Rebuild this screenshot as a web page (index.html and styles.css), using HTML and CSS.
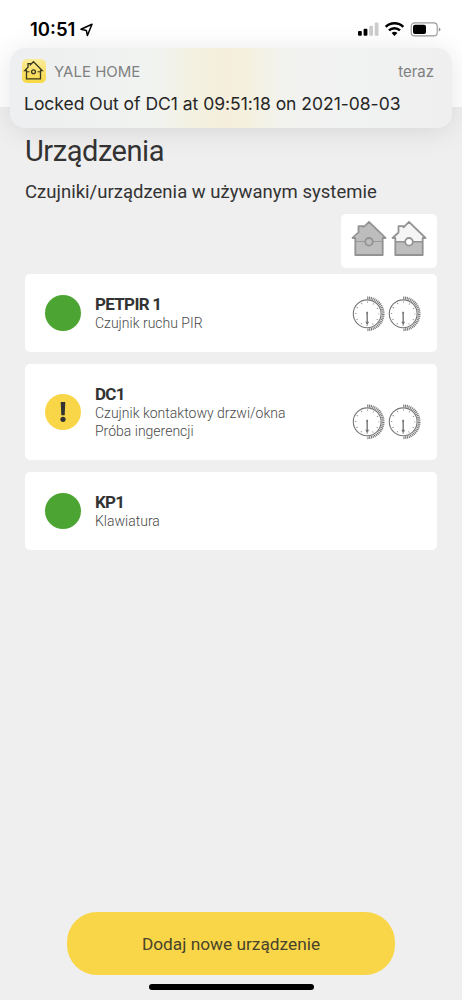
FILE: index.html
```html
<!DOCTYPE html>
<html lang="pl">
<head>
<meta charset="utf-8">
<title>Yale Home</title>
<link rel="stylesheet" href="styles.css">
</head>
<body>
<svg class="defs" width="0" height="0" aria-hidden="true">
  <defs>
    <symbol id="clock" viewBox="0 0 36 38">
      <circle cx="17.200" cy="19.800" r="13.900" fill="#fff" stroke="#777" stroke-width="1.100"/>
      <path d="M17.200 3.800a16 16 0 0 1 0 32" fill="none" stroke="#777" stroke-width="2.700" stroke-dasharray="1.100 .7"/>
      <circle cx="17.200" cy="19.800" r="11.600" fill="none" stroke="#777" stroke-width="1.300" stroke-dasharray=".8 5.273" stroke-dashoffset=".4"/>
      <path d="M17.200 17.800v12" stroke="#777" stroke-width="1.400"/>
      <circle cx="17.200" cy="19" r="1" fill="#777"/>
      <path d="M15.300 27.800h3.800L17.200 31.300z" fill="#777"/>
    </symbol>
    <symbol id="house-full" viewBox="0 0 36 38">
      <path d="M4 19 7.500 15V8h5v2L18 3l15 16h-1.500v17H4z" fill="#bdbdbd"/>
      <path d="M4 22.500h10m8 0h9" stroke="#999" stroke-width="1"/>
      <path d="M4.300 19v17h27.400V19H34.500L18 2.800l-5.500 5.500V7.200H7.500v6.300L1.500 19z" fill="none" stroke="#939393" stroke-width="1.800" stroke-linejoin="round"/>
      <circle cx="18" cy="22.800" r="3.800" fill="#bdbdbd" stroke="#939393" stroke-width="1.800"/>
    </symbol>
    <symbol id="house-half" viewBox="0 0 36 38">
      <path d="M4 19 7.500 15V8h5v2L18 3l15 16h-1.500v17H4z" fill="#f5f5f5"/>
      <path d="M4 22.800h27.500V36H4z" fill="#bdbdbd"/>
      <path d="M4 22.800h10m8 0h9" stroke="#939393" stroke-width="1.600"/>
      <path d="M4.300 19v17h27.400V19H34.500L18 2.800l-5.500 5.500V7.200H7.500v6.300L1.500 19z" fill="none" stroke="#939393" stroke-width="1.800" stroke-linejoin="round"/>
      <circle cx="18" cy="22.800" r="3.800" fill="#fff" stroke="#939393" stroke-width="1.800"/>
    </symbol>
  </defs>
</svg>
<div class="screen">
  <header class="topbar">
    <div class="clock-time"><span class="time">10:51</span>
      <svg width="13" height="14" viewBox="0 0 13 14"><path d="M1 6.300 12 1.200 7.400 12.500 6.300 7.400z" fill="none" stroke="#000" stroke-width="1.500" stroke-linejoin="round"/></svg>
    </div>
    <svg class="status-icons" width="86" height="18" viewBox="0 0 86 18">
      <g><rect x="2" y="11" width="3.800" height="4.800" rx="1"/><rect x="7.600" y="8.800" width="3.800" height="7" rx="1"/><rect x="13.200" y="5.700" width="3.800" height="10.100" rx="1" fill="#ccc"/><rect x="18.700" y="2.500" width="3.800" height="13.300" rx="1" fill="#ccc"/></g>
      <g fill="none" stroke="#000" stroke-width="2.500"><path d="M29.700 6.800a12.500 12.500 0 0 1 17.600 0"/><path d="M33 10.400a7.800 7.800 0 0 1 11 0"/></g>
      <path d="m38.500 16-2.900-3a4.300 4.300 0 0 1 5.800 0z"/>
      <rect x="55.200" y="2.900" width="26" height="13" rx="3.500" fill="none" stroke="#999" stroke-width="1.100"/>
      <rect x="57" y="4.700" width="13" height="9.400" rx="2"/>
      <path d="M82.700 7.400v4q1.800-.5 1.800-2t-1.800-2" fill="#999"/>
    </svg>
  </header>
  <section class="notification">
    <div class="notification-head">
      <svg class="app-icon" width="24" height="24" viewBox="0 0 24 24">
        <defs><linearGradient id="yellow" x1="0" y1="0" x2="0" y2="1"><stop stop-color="#fbeb9b"/><stop offset="1" stop-color="#f8d842"/></linearGradient></defs>
        <rect width="24" height="24" rx="5" fill="url(#yellow)"/>
        <path d="M4.500 11.500v8.300h14v-8.300h1.700L11.500 2.700 8.400 5.800V4.700H6v3.500l-3.200 3.300z" fill="none" stroke="#39381f" stroke-width="1.300"/>
        <circle cx="11.500" cy="12.800" r="1.900" fill="none" stroke="#39381f" stroke-width="1.300"/>
        <path d="M4.500 12.800h3m8 0h3" stroke="#39381f"/>
      </svg>
      <span class="app-name">YALE HOME</span>
      <span class="when">teraz</span>
    </div>
    <div><span class="message">Locked Out of DC1 at 09:51:18 on 2021-08-03</span></div>
  </section>
  <main class="content">
    <h1><span class="title">Urządzenia</span></h1>
    <p class="lead"><span class="subtitle">Czujniki/urządzenia w używanym systemie</span></p>
    <div class="modes">
      <svg width="36" height="38"><use href="#house-full"/></svg>
      <svg width="36" height="38"><use href="#house-half"/></svg>
    </div>
    <div class="devices">
      <article class="card">
        <span class="state"></span>
        <div class="info"><h2><span class="name-long">PETPIR 1</span></h2><p><span>Czujnik ruchu PIR</span></p></div>
        <div class="clocks"><svg width="36" height="38"><use href="#clock"/></svg><svg width="36" height="38"><use href="#clock"/></svg></div>
      </article>
      <article class="card card-tall">
        <span class="state warning"><svg width="8" height="22" viewBox="0 0 8 22"><path d="M1.700 1h4.600l-.6 13.300H2.300z" fill="#333"/><circle cx="4" cy="18.300" r="2.600" fill="#333"/></svg></span>
        <div class="info"><h2><span class="name-short">DC1</span></h2><p><span>Czujnik kontaktowy drzwi/okna</span></p><p><span>Próba ingerencji</span></p></div>
        <div class="clocks"><svg width="36" height="38"><use href="#clock"/></svg><svg width="36" height="38"><use href="#clock"/></svg></div>
      </article>
      <article class="card">
        <span class="state"></span>
        <div class="info"><h2><span class="name-short">KP1</span></h2><p><span>Klawiatura</span></p></div>
      </article>
    </div>
  </main>
  <footer class="bottom">
    <button class="add"><span class="add-label">Dodaj nowe urządzenie</span></button>
    <div class="home-indicator"></div>
  </footer>
</div>
</body>
</html>
```
FILE: styles.css
```css
* { box-sizing: border-box; }
body { margin: 0; background: #efefef; color: #333; font-family: Roboto, "Noto Sans", sans-serif; }
h1, h2, p { margin: 0; font-weight: 400; }
span { white-space: nowrap; }
svg { display: block; flex: none; }
.defs { position: absolute; }
.screen { position: relative; height: 1000px; display: flex; flex-direction: column; overflow: hidden; }
.topbar { height: 107px; flex: none; background: #fff; display: flex; justify-content: space-between; align-items: flex-start; padding: 20px 20px 0 30px; color: #000; }
.clock-time { display: flex; align-items: center; height: 19px; gap: 5px; font: 600 18.500px/19px Inter, sans-serif; }
.notification { position: absolute; left: 10px; top: 48px; width: 442px; height: 80px; border-radius: 15px; padding: 11px 18px 0 12px; font-family: Inter, sans-serif;
  background: linear-gradient(90deg, #edeff0 0, #f1f3f1 32%, #f3f1e0 42%, #f6eedd 49%, #f4f1df 54%, #f2f3ef 62%, #f1f2f2 75%, #efefef 100%); box-shadow: 0 3px 28px rgba(0,0,0,.1); }
.notification-head { display: flex; align-items: center; height: 24px; font-size: 15px; color: #808080; }
.app-name { margin-left: 8px; }
.when { margin-left: auto; }
.message { display: block; margin: 10px 0 0 2px; font-size: 17.500px; line-height: 22px; letter-spacing: -.02px; color: #262626; }
.content { padding: 28px 25px 0; display: flex; flex-direction: column; }
.content h1 { font-size: 29px; line-height: 32px; font-weight: 400; }
.title { letter-spacing: -.45px; }
.lead { font-size: 18.500px; line-height: 24px; margin-top: 13px; }
.subtitle { letter-spacing: .02px; }
.modes { align-self: flex-end; width: 96px; height: 54px; margin-top: 10px; background: #fff; border-radius: 5px; padding: 5px 10px; display: flex; gap: 4px; }
.devices { display: flex; flex-direction: column; gap: 12px; margin-top: 6px; }
.card { height: 78px; background: #fff; border-radius: 5px; display: flex; align-items: center; padding: 0 15px 0 20px; }
.card-tall { height: 96px; }
.card-tall .clocks { padding-top: 18px; }
.state { width: 36px; height: 36px; border-radius: 50%; background: #4ca532; flex: none; }
.warning { background: #f9d648; display: flex; align-items: center; justify-content: center; }
.info { margin-left: 14px; }
.info h2 { font-size: 17px; line-height: 20px; font-weight: 700; }
.name-long { letter-spacing: -.7px; }
.name-short { letter-spacing: -.7px; }
.info p { font-size: 14px; line-height: 18px; font-weight: 300; color: #4a4a4a; }
.clocks { display: flex; margin-left: auto; }
.bottom { margin-top: auto; display: flex; flex-direction: column; align-items: center; padding-bottom: 9px; }
.add { width: 328px; height: 63px; border: 0; border-radius: 30px; background: #f9d648; color: #48432b; font: 400 17.300px Roboto, sans-serif; margin-bottom: 9px; padding-top: 1px; }
.home-indicator { width: 165px; height: 6px; border-radius: 4px; background: #000; margin-bottom: 1px; }
```
